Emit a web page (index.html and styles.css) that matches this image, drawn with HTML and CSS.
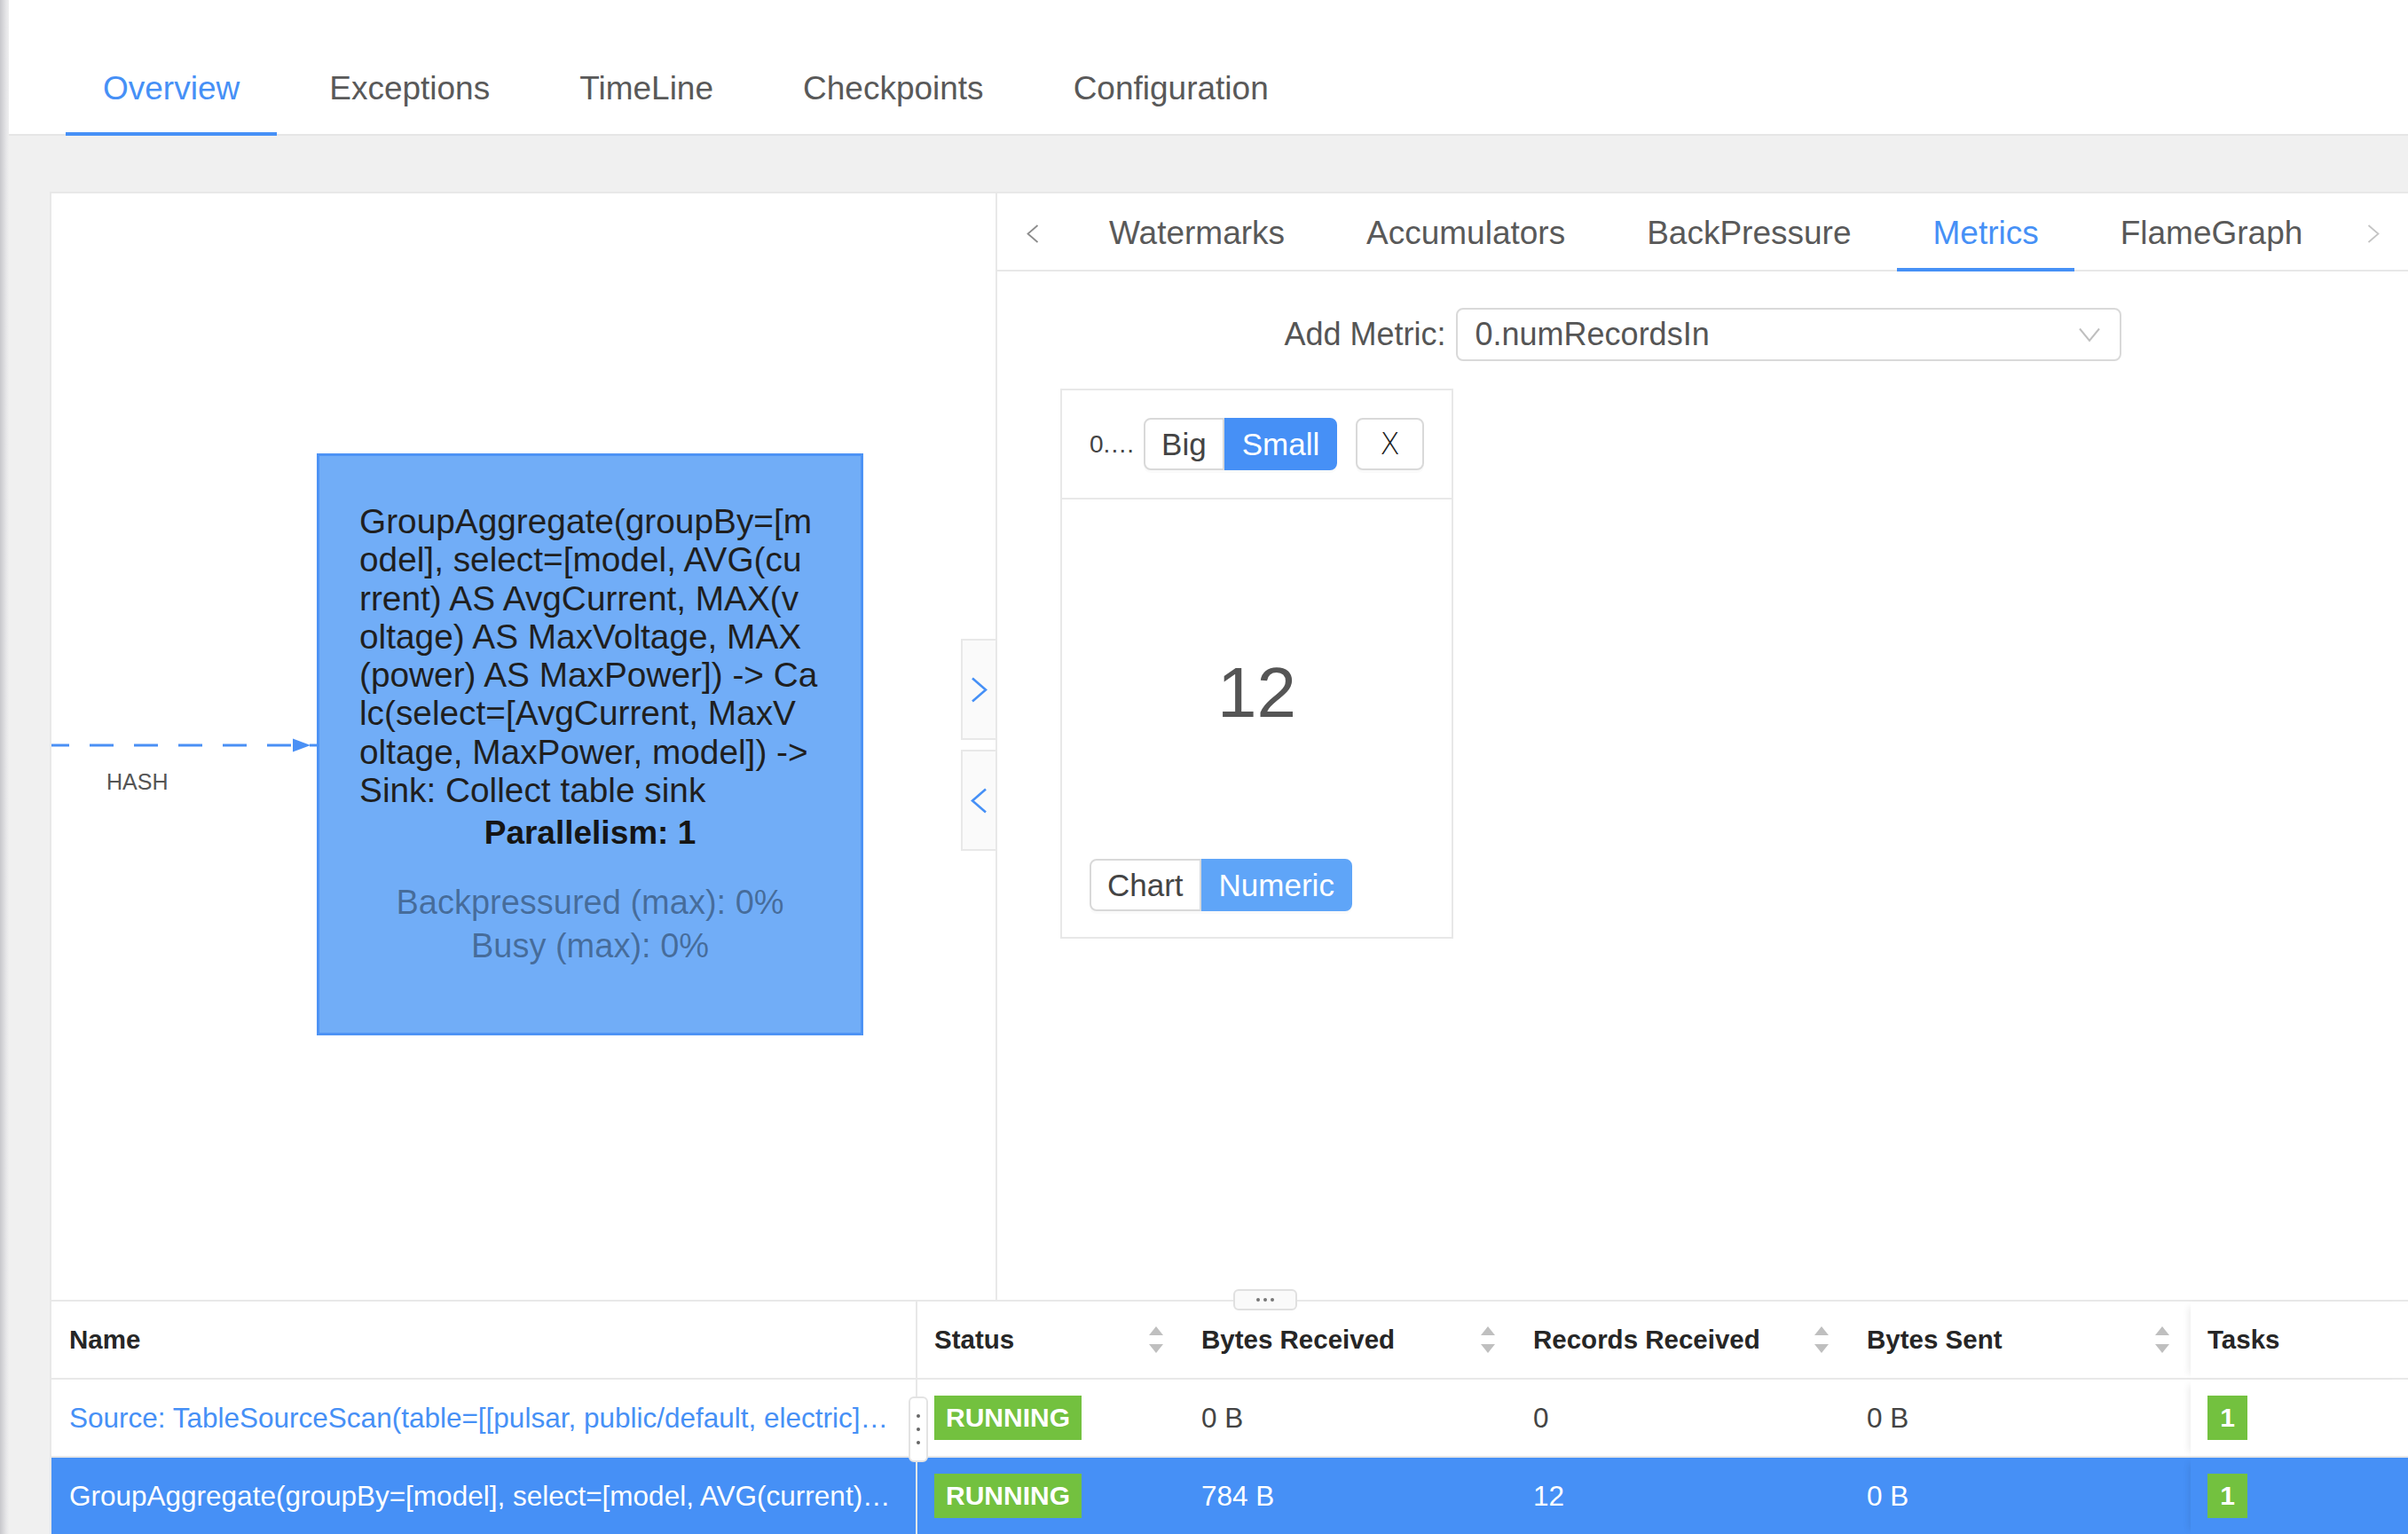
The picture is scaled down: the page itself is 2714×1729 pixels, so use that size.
FILE: index.html
```html
<!DOCTYPE html>
<html lang="en">
<head>
<meta charset="utf-8">
<title>Job Overview</title>
<link rel="stylesheet" href="styles.css">
</head>
<body>
<div class="edge-shadow"></div>
<div class="main">
  <header class="top">
    <nav class="tabs">
      <div class="tab active">Overview</div>
      <div class="tab">Exceptions</div>
      <div class="tab">TimeLine</div>
      <div class="tab">Checkpoints</div>
      <div class="tab">Configuration</div>
    </nav>
  </header>
  <section class="content">
    <div class="card">
      <div class="split">
        <div class="graph">
          <svg class="edge" width="299" height="700" viewBox="0 0 299 700">
            <line x1="0" y1="622" x2="272" y2="622" stroke="#4a90f5" stroke-width="3" stroke-dasharray="27 23" stroke-dashoffset="7"/>
            <polygon points="272,614.5 292,622 272,629.5" fill="#4a90f5"/>
            <line x1="291" y1="622" x2="299" y2="622" stroke="#4a90f5" stroke-width="3"/>
          </svg>
          <div class="edge-label">HASH</div>
          <div class="node">
            <div class="node-desc">GroupAggregate(groupBy=[m<br>odel], select=[model, AVG(cu<br>rrent) AS AvgCurrent, MAX(v<br>oltage) AS MaxVoltage, MAX<br>(power) AS MaxPower]) -&gt; Ca<br>lc(select=[AvgCurrent, MaxV<br>oltage, MaxPower, model]) -&gt;<br>Sink: Collect table sink</div>
            <div class="node-par">Parallelism: 1</div>
            <div class="node-metrics">Backpressured (max): 0%<br>Busy (max): 0%</div>
          </div>
          <div class="collapse">
            <button class="collapse-btn" type="button"><svg width="19" height="29" viewBox="0 0 19 29"><polyline points="2,1.5 17,14.5 2,27.5" fill="none" stroke="#4690f6" stroke-width="2.6"/></svg></button>
            <button class="collapse-btn" type="button"><svg width="19" height="29" viewBox="0 0 19 29"><polyline points="17,1.5 2,14.5 17,27.5" fill="none" stroke="#4690f6" stroke-width="2.6"/></svg></button>
          </div>
        </div>
        <div class="detail">
          <div class="subtabs">
            <div class="subtabs-arrow prev"><svg width="14" height="21" viewBox="0 0 14 21"><polyline points="12.5,1 1.5,10.5 12.5,20" fill="none" stroke="#8c8c8c" stroke-width="1.8"/></svg></div>
            <div class="subtabs-list">
              <div class="subtab">Watermarks</div>
              <div class="subtab">Accumulators</div>
              <div class="subtab">BackPressure</div>
              <div class="subtab active">Metrics</div>
              <div class="subtab">FlameGraph</div>
            </div>
            <div class="subtabs-arrow next"><svg width="14" height="21" viewBox="0 0 14 21"><polyline points="1.5,1 12.5,10.5 1.5,20" fill="none" stroke="#c4c4c4" stroke-width="1.8"/></svg></div>
          </div>
          <div class="add-metric">
            <span class="add-label">Add Metric:</span>
            <div class="select">
              <span class="select-value">0.numRecordsIn</span>
              <svg width="24" height="17" viewBox="0 0 24 17"><polyline points="1,1.5 12,15 23,1.5" fill="none" stroke="#bfbfbf" stroke-width="2"/></svg>
            </div>
          </div>
          <div class="metrics">
            <div class="metric-card">
              <div class="metric-head">
                <span class="metric-name" title="0.numRecordsIn">0.…</span>
                <div class="btn-group">
                  <span class="btn">Big</span>
                  <span class="btn on">Small</span>
                </div>
                <span class="btn close">X</span>
              </div>
              <div class="metric-body">
                <div class="metric-value">12</div>
                <div class="btn-group">
                  <span class="btn">Chart</span>
                  <span class="btn on light">Numeric</span>
                </div>
              </div>
            </div>
          </div>
        </div>
      </div>
      <div class="vtable">
        <div class="split-handle"><svg width="22" height="6" viewBox="0 0 22 6"><circle cx="3" cy="3" r="2" fill="#777"/><circle cx="11" cy="3" r="2" fill="#777"/><circle cx="19" cy="3" r="2" fill="#777"/></svg></div>
        <div class="vrow vhead">
          <div class="vcell name">Name</div>
          <div class="vcell">Status<svg class="sorter" width="16" height="30" viewBox="0 0 16 30"><polygon points="8,0 16,10 0,10" fill="#bfbfbf"/><polygon points="0,20 16,20 8,30" fill="#bfbfbf"/></svg></div>
          <div class="vcell">Bytes Received<svg class="sorter" width="16" height="30" viewBox="0 0 16 30"><polygon points="8,0 16,10 0,10" fill="#bfbfbf"/><polygon points="0,20 16,20 8,30" fill="#bfbfbf"/></svg></div>
          <div class="vcell">Records Received<svg class="sorter" width="16" height="30" viewBox="0 0 16 30"><polygon points="8,0 16,10 0,10" fill="#bfbfbf"/><polygon points="0,20 16,20 8,30" fill="#bfbfbf"/></svg></div>
          <div class="vcell">Bytes Sent<svg class="sorter" width="16" height="30" viewBox="0 0 16 30"><polygon points="8,0 16,10 0,10" fill="#bfbfbf"/><polygon points="0,20 16,20 8,30" fill="#bfbfbf"/></svg></div>
          <div class="vcell tasks">Tasks</div>
        </div>
        <div class="vrow">
          <div class="vcell name link">Source: TableSourceScan(table=[[pulsar, public/default, electric]…</div>
          <div class="vcell"><span class="tag">RUNNING</span></div>
          <div class="vcell">0 B</div>
          <div class="vcell">0</div>
          <div class="vcell">0 B</div>
          <div class="vcell tasks"><span class="task">1</span></div>
        </div>
        <div class="vrow selected">
          <div class="vcell name">GroupAggregate(groupBy=[model], select=[model, AVG(current)…</div>
          <div class="vcell"><span class="tag">RUNNING</span></div>
          <div class="vcell">784 B</div>
          <div class="vcell">12</div>
          <div class="vcell">0 B</div>
          <div class="vcell tasks"><span class="task">1</span></div>
        </div>
        <div class="col-handle"><svg width="6" height="40" viewBox="0 0 6 40"><circle cx="3" cy="5" r="2" fill="#666"/><circle cx="3" cy="20" r="2" fill="#666"/><circle cx="3" cy="35" r="2" fill="#666"/></svg></div>
      </div>
    </div>
  </section>
</div>
</body>
</html>
```

FILE: styles.css
```css
html, body {
  margin: 0;
  height: 1729px;
  overflow: hidden;
}

body {
  display: flex;
  background: #f0f0f0;
  font-family: "Liberation Sans", Arial, sans-serif;
  color: #444;
}

.edge-shadow {
  width: 10px;
  flex: none;
  background: linear-gradient(to right, #c8c8cc, #e6e6e8 70%, #efefef);
}

.main {
  flex: 1;
  min-width: 0;
  display: flex;
  flex-direction: column;
}

/* top header with tabs */
.top {
  height: 153px;
  box-sizing: border-box;
  background: #fff;
  border-bottom: 2px solid #e6e6e6;
  padding-left: 64px;
  display: flex;
  align-items: flex-end;
  flex: none;
}

.tabs {
  display: flex;
  gap: 17px;
  margin-bottom: -2px;
}

.tab {
  height: 105px;
  box-sizing: border-box;
  padding: 3px 42px 0;
  display: flex;
  align-items: center;
  font-size: 37px;
  color: #595959;
  border-bottom: 4px solid transparent;
  white-space: nowrap;
}

.tab.active {
  color: #4690f6;
  border-bottom-color: #4690f6;
}

/* content */
.content {
  flex: 1;
  padding: 63px 0 0 46px;
}

.card {
  background: #fff;
  border: 2px solid #e8e8e8;
  border-right: 0;
  border-bottom: 0;
}

.split {
  display: flex;
  height: 1249px;
  box-sizing: border-box;
  border-bottom: 2px solid #e8e8e8;
}

.graph {
  width: 1064px;
  flex: none;
  position: relative;
  overflow: hidden;
}

.edge {
  position: absolute;
  left: 0;
  top: 0;
}

.edge-label {
  position: absolute;
  left: 62px;
  top: 651px;
  font-size: 25px;
  line-height: 25px;
  color: #555;
}

.node {
  position: absolute;
  left: 299px;
  top: 293px;
  width: 616px;
  height: 656px;
  box-sizing: border-box;
  background: #71adf7;
  border: 3px solid #4d93f5;
  padding: 52px 45px 0;
  color: #1f1f1f;
}

.node-desc {
  font-size: 38.8px;
  line-height: 43.3px;
  white-space: nowrap;
}

.node-par {
  margin-top: 4.4px;
  font-weight: bold;
  font-size: 37px;
  line-height: 43.3px;
  text-align: center;
  color: #151515;
}

.node-metrics {
  margin-top: 32.6px;
  font-size: 38px;
  line-height: 49.5px;
  text-align: center;
  color: rgba(0, 0, 0, 0.38);
}

.collapse {
  position: absolute;
  right: 0;
  top: 502px;
  display: flex;
  flex-direction: column;
  gap: 11px;
}

.collapse-btn {
  width: 39px;
  height: 114px;
  box-sizing: border-box;
  background: #fafafa;
  border: 2px solid #e8e8e8;
  border-right: 0;
  padding: 0;
  display: flex;
  align-items: center;
  justify-content: center;
}

/* detail pane */
.detail {
  flex: 1;
  min-width: 0;
  border-left: 2px solid #e8e8e8;
}

.subtabs {
  display: flex;
  height: 88px;
  box-sizing: border-box;
  border-bottom: 2px solid #e8e8e8;
}

.subtabs-arrow {
  flex: none;
  display: flex;
  align-items: center;
  justify-content: center;
  padding-top: 4px;
}

.subtabs-arrow.prev {
  width: 80px;
}

.subtabs-arrow.next {
  width: 78px;
}

.subtabs-list {
  flex: 1;
  display: flex;
  gap: 12px;
  margin-left: 6px;
  margin-bottom: -2px;
  overflow: hidden;
}

.subtab {
  padding: 6px 40px 0;
  display: flex;
  align-items: center;
  font-size: 37px;
  color: #595959;
  border-bottom: 4px solid transparent;
  white-space: nowrap;
}

.subtab.active {
  color: #4690f6;
  border-bottom-color: #4690f6;
}

.add-metric {
  margin-top: 41px;
  display: flex;
  justify-content: center;
  align-items: center;
  gap: 11px;
}

.add-label {
  font-size: 36px;
  color: #555;
  white-space: nowrap;
}

.select {
  width: 750px;
  height: 60px;
  box-sizing: border-box;
  border: 2px solid #d9d9d9;
  border-radius: 8px;
  padding: 0 22px 0 20px;
  display: flex;
  align-items: center;
  justify-content: space-between;
  font-size: 36px;
  color: #555;
}

.metrics {
  padding: 31px 0 0 71px;
}

.metric-card {
  width: 443px;
  box-sizing: border-box;
  border: 2px solid #e8e8e8;
}

.metric-head {
  height: 123px;
  box-sizing: border-box;
  border-bottom: 2px solid #e8e8e8;
  padding: 0 31px;
  display: flex;
  align-items: center;
}

.metric-name {
  width: 56px;
  margin-right: 6px;
  font-size: 28px;
  color: #444;
  white-space: nowrap;
}

.btn-group {
  display: flex;
}

.btn {
  height: 59px;
  box-sizing: border-box;
  border: 2px solid #d9d9d9;
  padding: 0 18px;
  display: flex;
  align-items: center;
  font-size: 35px;
  color: #444;
  background: #fff;
  box-shadow: 0 3px 0 rgba(0, 0, 0, 0.02);
  white-space: nowrap;
}

.btn-group .btn:first-child {
  border-radius: 8px 0 0 8px;
}

.btn-group .btn:last-child {
  border-radius: 0 8px 8px 0;
}

.btn.on {
  background: #4690f6;
  border-color: #4690f6;
  color: #fff;
}

.btn.on.light {
  background: #5fa5f8;
  border-color: #5fa5f8;
}

.btn.close {
  margin-left: 21px;
  border-radius: 8px;
  width: 78px;
  padding: 0;
  justify-content: center;
  font-family: "DejaVu Sans", "Liberation Sans", sans-serif;
  font-weight: 200;
  font-size: 33px;
  color: #1e1e1e;
}

.metric-body {
  padding: 178px 31px 29px;
}

.metric-value {
  font-size: 80px;
  line-height: 80px;
  text-align: center;
  color: #555;
}

.metric-body .btn-group {
  margin-top: 147px;
}

/* vertices table */
.vtable {
  position: relative;
}

.vrow {
  display: grid;
  grid-template-columns: 976px 301px 374px 376px 384px 1fr;
  height: 88px;
}

.vcell {
  box-sizing: border-box;
  min-width: 0;
  border-bottom: 2px solid #e8e8e8;
  padding: 0 19px;
  display: flex;
  align-items: center;
  font-size: 31.5px;
  color: #444;
  white-space: nowrap;
}

.vcell.name {
  display: block;
  line-height: 86px;
  padding: 0 18px 0 20px;
  border-right: 2px solid #e8e8e8;
  overflow: hidden;
}

.vcell.link {
  color: #4690f6;
}

.vcell.tasks {
  box-shadow: -8px 0 8px -6px rgba(0, 0, 0, 0.08);
}

.vhead .vcell {
  justify-content: space-between;
  padding-right: 24px;
  font-weight: bold;
  font-size: 29.5px;
  color: #262626;
}

.vrow.selected .vcell {
  background: #4690f6;
  color: #fff;
}

.tag {
  height: 50px;
  line-height: 50px;
  padding: 0 13px;
  background: #73c13f;
  color: #fff;
  font-weight: bold;
  font-size: 30px;
}

.task {
  width: 45px;
  height: 50px;
  line-height: 50px;
  text-align: center;
  background: #73c13f;
  color: #fff;
  font-weight: bold;
  font-size: 30px;
}

.split-handle {
  position: absolute;
  left: 1332px;
  top: -14px;
  width: 72px;
  height: 24px;
  box-sizing: border-box;
  background: #fafafa;
  border: 2px solid #e0e0e0;
  border-radius: 6px;
  display: flex;
  align-items: center;
  justify-content: center;
}

.col-handle {
  position: absolute;
  left: 966px;
  top: 107px;
  width: 22px;
  height: 74px;
  box-sizing: border-box;
  background: #fff;
  border: 2px solid #e3e3e3;
  border-radius: 6px;
  display: flex;
  align-items: center;
  justify-content: center;
}
```
